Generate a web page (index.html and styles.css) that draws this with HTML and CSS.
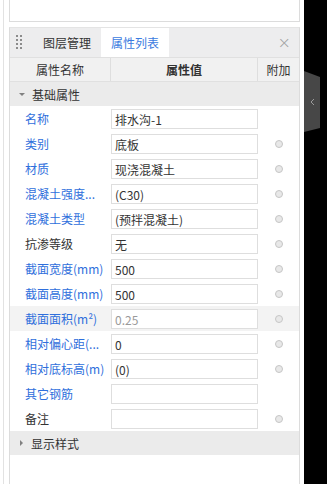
FILE: index.html
```html
<!DOCTYPE html>
<html lang="zh">
<head>
<meta charset="utf-8">
<link rel="stylesheet" href="styles.css">
</head>
<body>
<div class="strip"></div>
<div class="main">
  <div class="toppanel"></div>
  <div class="panel">
    <div class="bar">
      <div class="grip"><i></i><i></i><i></i><i></i><i></i><i></i><i></i><i></i></div>
      <div class="tab first">图层管理</div>
      <div class="tab active">属性列表</div>
      <div class="close">×</div>
    </div>
    <div class="grid head">
      <div class="hc">属性名称</div>
      <div class="hc bold">属性值</div>
      <div class="hc last">附加</div>
    </div>
    <div class="group"><span class="tri down"></span>基础属性</div>
    <div class="grid row"><div class="lbl blue">名称</div><div class="val"><div class="inp">排水沟-1</div></div><div class="add"></div></div>
    <div class="grid row"><div class="lbl blue">类别</div><div class="val"><div class="inp">底板</div></div><div class="add"><span class="radio"></span></div></div>
    <div class="grid row"><div class="lbl blue">材质</div><div class="val"><div class="inp">现浇混凝土</div></div><div class="add"><span class="radio"></span></div></div>
    <div class="grid row"><div class="lbl blue">混凝土强度...</div><div class="val"><div class="inp">(C30)</div></div><div class="add"><span class="radio"></span></div></div>
    <div class="grid row"><div class="lbl blue">混凝土类型</div><div class="val"><div class="inp">(预拌混凝土)</div></div><div class="add"><span class="radio"></span></div></div>
    <div class="grid row"><div class="lbl">抗渗等级</div><div class="val"><div class="inp">无</div></div><div class="add"><span class="radio"></span></div></div>
    <div class="grid row"><div class="lbl blue">截面宽度(mm)</div><div class="val"><div class="inp">500</div></div><div class="add"><span class="radio"></span></div></div>
    <div class="grid row"><div class="lbl blue">截面高度(mm)</div><div class="val"><div class="inp">500</div></div><div class="add"><span class="radio"></span></div></div>
    <div class="grid row shaded"><div class="lbl blue">截面面积(m²)</div><div class="val"><div class="inp muted">0.25</div></div><div class="add"><span class="radio"></span></div></div>
    <div class="grid row"><div class="lbl blue">相对偏心距(...</div><div class="val"><div class="inp">0</div></div><div class="add"><span class="radio"></span></div></div>
    <div class="grid row"><div class="lbl blue">相对底标高(m)</div><div class="val"><div class="inp">(0)</div></div><div class="add"><span class="radio"></span></div></div>
    <div class="grid row"><div class="lbl blue">其它钢筋</div><div class="val"><div class="inp"></div></div><div class="add"></div></div>
    <div class="grid row"><div class="lbl">备注</div><div class="val"><div class="inp"></div></div><div class="add"><span class="radio"></span></div></div>
    <div class="group"><span class="tri right"></span>显示样式</div>
    <div class="filler"></div>
  </div>
</div>
<div class="gap"></div>
<div class="dark">
  <svg class="handle" width="16" height="62" viewBox="0 0 16 62">
    <polygon points="0,0 16,6 16,57 0,61" fill="#474747"/>
    <polyline points="10,28 7,31 10,34" fill="none" stroke="#9a9a9a" stroke-width="1"/>
  </svg>
</div>
</body>
</html>
```

FILE: styles.css
```css
html, body {
  margin: 0;
  padding: 0;
  background: #ffffff;
}
body {
  display: flex;
  width: 327px;
  height: 484px;
  overflow: hidden;
  font-family: "Noto Sans CJK SC", "Noto Sans", sans-serif;
  font-size: 12px;
  color: #333333;
}
.strip {
  margin-left: 3px;
  width: 5px;
  border-left: 1px solid #e2e2e2;
}
.main {
  width: 291px;
  display: flex;
  flex-direction: column;
}
.toppanel {
  height: 22px;
  flex: none;
  box-sizing: border-box;
  border: 1px solid #dcdcdc;
  border-top: none;
  background: #ffffff;
}
.panel {
  margin-top: 5px;
  flex: 1;
  display: flex;
  flex-direction: column;
  border-left: 1px solid #dcdcdc;
  border-right: 1px solid #dcdcdc;
  border-top: 1px solid #e4e4e4;
}
.bar {
  height: 29px;
  background: #ededee;
  display: flex;
  align-items: stretch;
}
.grip {
  width: 6px;
  margin: 7px 0 0 6px;
  display: grid;
  grid-template-columns: 2px 2px;
  grid-auto-rows: 2px;
  column-gap: 2px;
  row-gap: 2px;
  align-content: start;
}
.grip i {
  display: block;
  width: 2px;
  height: 2px;
  background: #8c8c8c;
}
.tab {
  display: flex;
  align-items: center;
  padding: 0 10px;
  color: #333333;
  font-size: 12px;
}
.tab.first {
  margin-left: 11px;
}
.tab.active {
  background: #ffffff;
  color: #3b7be0;
}
.close {
  margin-left: auto;
  margin-right: 8px;
  display: flex;
  align-items: center;
  font-size: 16px;
  color: #a0a0a0;
  font-family: "DejaVu Sans", sans-serif;
  font-weight: 300;
}
.grid {
  display: grid;
  grid-template-columns: 101px 147px 41px;
}
.head {
  height: 25px;
  background: #f1f1f1;
  border-top: 1px solid #e0e0e0;
  border-bottom: 1px solid #e0e0e0;
  box-sizing: border-box;
}
.hc {
  display: flex;
  align-items: center;
  justify-content: center;
  border-right: 1px solid #dedede;
  color: #333333;
}
.hc.bold {
  font-weight: bold;
}
.hc.last {
  border-right: none;
}
.group {
  height: 24px;
  background: #ebebeb;
  display: flex;
  align-items: center;
  padding-left: 9px;
  color: #333333;
}
.tri {
  width: 0;
  height: 0;
  margin-right: 7px;
}
.tri.down {
  border-left: 3px solid transparent;
  border-right: 3px solid transparent;
  border-top: 3px solid #808080;
}
.tri.right {
  border-top: 3px solid transparent;
  border-bottom: 3px solid transparent;
  border-left: 3px solid #808080;
  margin-left: 1px;
  margin-right: 8px;
}
.row {
  height: 25px;
}
.row.shaded {
  background: #f3f3f3;
}
.lbl {
  display: flex;
  align-items: center;
  padding-left: 15px;
  white-space: nowrap;
  color: #333333;
}
.lbl.blue {
  color: #2f6fdc;
}
.val {
  padding-top: 3px;
}
.inp {
  box-sizing: border-box;
  height: 20px;
  border: 1px solid #dedede;
  background: #ffffff;
  display: flex;
  align-items: center;
  padding-left: 3px;
  color: #333333;
}
.inp.muted {
  color: #9a9a9a;
}
.add {
  display: flex;
  align-items: center;
  justify-content: center;
}
.radio {
  box-sizing: border-box;
  width: 8px;
  height: 8px;
  border-radius: 50%;
  border: 1px solid #c6c6c6;
  background: #e8e8e8;
}
.filler {
  flex: 1;
}
.gap {
  width: 4px;
}
.dark {
  flex: 1;
  background: #000000;
}
.handle {
  display: block;
  margin-top: 71px;
}
```
